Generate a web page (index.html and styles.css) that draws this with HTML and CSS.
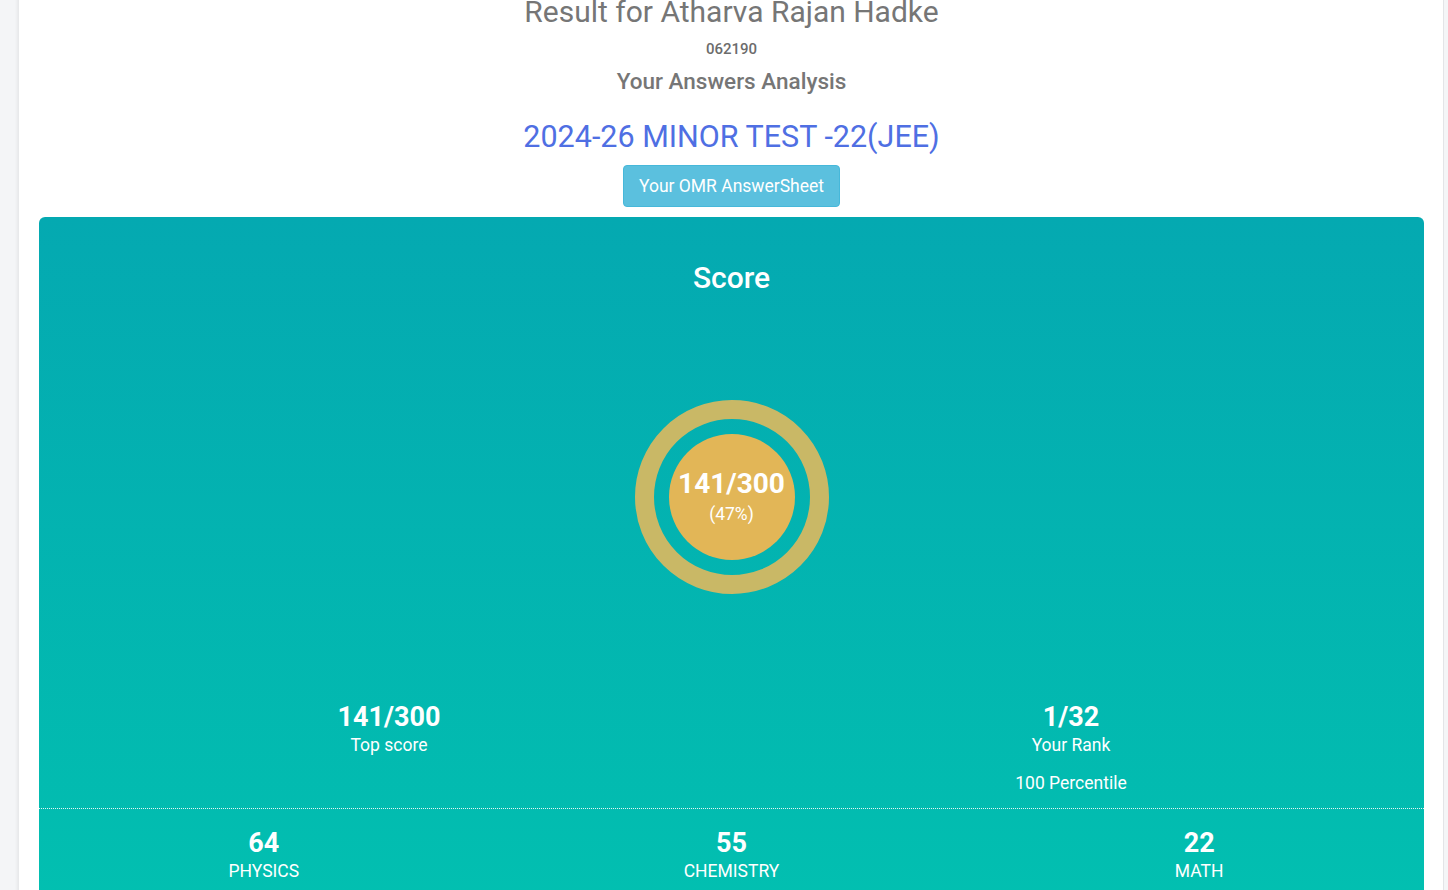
FILE: index.html
```html
<!DOCTYPE html>
<html>
<head>
<meta charset="utf-8">
<link rel="stylesheet" href="styles.css">
</head>
<body>
<div class="page">
  <div class="header">
    <h1 class="name">Result for Atharva Rajan Hadke</h1>
    <div class="roll">062190</div>
    <h3 class="analysis">Your Answers Analysis</h3>
    <h2 class="test">2024-26 MINOR TEST -22(JEE)</h2>
    <a class="omr-btn">Your OMR AnswerSheet</a>
  </div>
  <div class="card">
    <h2 class="score-title">Score</h2>
    <div class="ring-wrap">
      <div class="ring">
        <div class="core">
          <div class="core-score">141/300</div>
          <div class="core-pct">(47%)</div>
        </div>
      </div>
    </div>
    <div class="stats">
      <div class="stat">
        <div class="stat-num">141/300</div>
        <div class="stat-label">Top score</div>
      </div>
      <div class="stat">
        <div class="stat-num">1/32</div>
        <div class="stat-label">Your Rank</div>
        <div class="stat-extra">100 Percentile</div>
      </div>
    </div>
    <div class="subjects">
      <div class="subject-row">
        <div class="subject">
          <div class="stat-num">64</div>
          <div class="subject-label">PHYSICS</div>
        </div>
        <div class="subject">
          <div class="stat-num">55</div>
          <div class="subject-label">CHEMISTRY</div>
        </div>
        <div class="subject">
          <div class="stat-num">22</div>
          <div class="subject-label">MATH</div>
        </div>
      </div>
    </div>
  </div>
</div>
</body>
</html>
```
FILE: styles.css
```css
html, body {
  margin: 0;
  padding: 0;
  height: 890px;
  overflow: hidden;
}
body {
  background: #f4f5f7;
  font-family: Roboto, "Liberation Sans", sans-serif;
}
.page {
  margin: 0 4px 0 19px;
  background: #fff;
  min-height: 900px;
  padding: 0 19px 0 20px;
  box-shadow: -2px 0 3px rgba(0,0,0,0.06);
  border-right: 1px solid #e3e4e7;
}
.header {
  text-align: center;
  margin-top: -6px;
}
.name {
  margin: 0;
  font-size: 30px;
  line-height: 36px;
  font-weight: 400;
  color: #767676;
}
.roll {
  margin-top: 10px;
  font-size: 15px;
  line-height: 18px;
  color: #6c6c6c;
  font-weight: 500;
}
.analysis {
  margin: 9px 0 0;
  font-size: 22.5px;
  line-height: 28px;
  font-weight: 500;
  color: #767676;
}
.test {
  margin: 24px 0 0;
  font-size: 30.5px;
  line-height: 36px;
  font-weight: 400;
  color: #4f6fe3;
}
.omr-btn {
  display: inline-block;
  margin-top: 10px;
  background: #5bc0de;
  border: 1px solid #46b8da;
  border-radius: 4px;
  color: #fff;
  font-size: 17.5px;
  line-height: 24px;
  padding: 8px 15px;
}
.card {
  margin-top: 10px;
  border-radius: 6px 6px 0 0;
  background: linear-gradient(to bottom, #04a9b1 0%, #02bcb0 80%, #02c2b1 100%);
  color: #fff;
  padding-top: 43px;
  height: 700px;
}
.score-title {
  margin: 0;
  text-align: center;
  font-size: 30px;
  line-height: 36px;
  font-weight: 500;
}
.ring-wrap {
  display: flex;
  justify-content: center;
  margin-top: 104px;
}
.ring {
  width: 194px;
  height: 194px;
  box-sizing: border-box;
  border-radius: 50%;
  border: 19px solid #c9b866;
  display: flex;
  align-items: center;
  justify-content: center;
}
.core {
  width: 126px;
  height: 126px;
  border-radius: 50%;
  background: #e2b657;
  display: flex;
  flex-direction: column;
  align-items: center;
  justify-content: center;
}
.core-score {
  font-size: 28px;
  line-height: 30px;
  font-weight: 700;
}
.core-pct {
  margin-top: 4px;
  font-size: 17.5px;
  line-height: 22px;
}
.stats {
  display: grid;
  grid-template-columns: 1fr 1fr;
  padding: 0 12px 0 9px;
  margin-top: 108px;
  text-align: center;
}
.stat-num {
  font-size: 27px;
  line-height: 31px;
  font-weight: 700;
}
.stat-label, .subject-label, .stat-extra {
  font-size: 17.5px;
  line-height: 24px;
}
.stat-extra {
  margin-top: 14px;
}
.subjects {
  margin-top: 13px;
  padding-top: 19px;
  border-top: 1px dotted #e8f3f3;
}
.subject-row {
  display: grid;
  grid-template-columns: repeat(3, 1fr);
  margin: 0 -9px;
  text-align: center;
}
.subject-label {
  text-transform: uppercase;
}
```
